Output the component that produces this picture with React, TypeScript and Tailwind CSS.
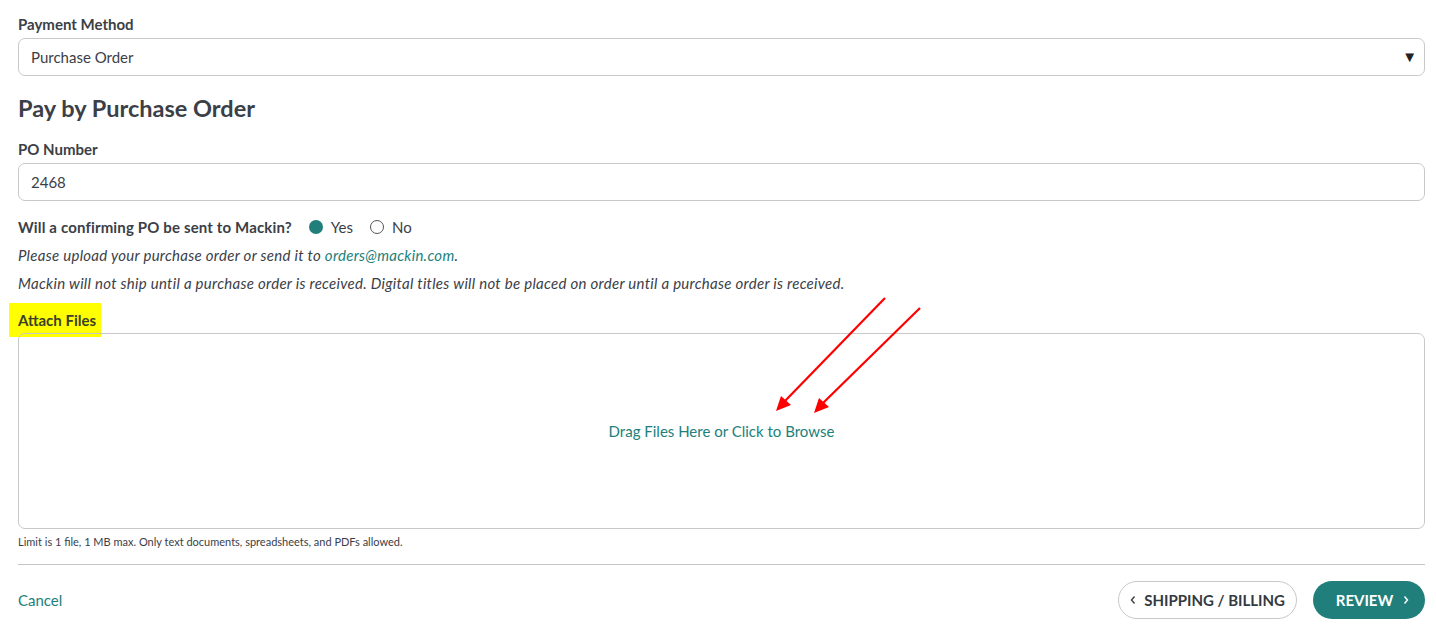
import React, { useState } from "react";

export default function App() {
  const [confirm, setConfirm] = useState("yes");

  return (
    <div
      className="relative w-[1436px] h-[635px] bg-white pl-[18px] pr-[11px] pt-[14px] text-[#3b4047] overflow-hidden"
      style={{ fontFamily: "Lato, 'Liberation Sans', sans-serif" }}
    >
      {/* Payment method */}
      <label className="block text-[15px] font-bold leading-[20px]">Payment Method</label>
      <div className="mt-[4px] relative h-[38px] border border-[#c9c9c9] rounded-[7px] flex items-center pl-[12px] text-[15px]">
        Purchase Order
        <span className="absolute right-[7px] top-[10px] text-[15px] text-[#222] leading-none">▼</span>
      </div>

      <h2 className="mt-[18px] text-[23.5px] font-bold leading-[28px]">Pay by Purchase Order</h2>

      {/* PO number */}
      <label className="block mt-[17px] text-[15px] font-bold leading-[20px]">PO Number</label>
      <div className="mt-[4px] h-[38px] border border-[#c9c9c9] rounded-[7px] flex items-center pl-[12px] text-[15px]">
        2468
      </div>

      {/* confirming PO */}
      <div className="mt-[16px] flex items-center text-[15px] leading-[20px]">
        <span className="font-bold tracking-[0.15px]">Will a confirming PO be sent to Mackin?</span>
        <button onClick={() => setConfirm("yes")} className="ml-[17px] flex items-center gap-[8px]">
          <span
            className={`w-[14px] h-[14px] rounded-full ${
              confirm === "yes" ? "bg-[#217f7b]" : "border border-[#555]"
            }`}
          />
          Yes
        </button>
        <button onClick={() => setConfirm("no")} className="ml-[17px] flex items-center gap-[8px]">
          <span
            className={`w-[14px] h-[14px] rounded-full ${
              confirm === "no" ? "bg-[#217f7b]" : "border border-[#555]"
            }`}
          />
          No
        </button>
      </div>
      <p className="mt-[8px] italic text-[15px] leading-[20px] tracking-[0.28px]">
        Please upload your purchase order or send it to{" "}
        <a className="text-[#217f7b]">orders@mackin.com</a>.
      </p>
      <p className="mt-[8px] italic text-[15px] leading-[20px] tracking-[0.28px]">
        Mackin will not ship until a purchase order is received. Digital titles will not be placed on
        order until a purchase order is received.
      </p>

      {/* attach files */}
      <div className="mt-[10px] -ml-[9px] w-[92px] h-[34px] bg-[#ffff00] pl-[9px] pt-[7px] text-[15px] font-bold leading-[20px] text-[#3b3f2a]">
        Attach Files
      </div>
      <div className="-mt-[4px] h-[196px] border border-[#c9c9c9] rounded-[7px] flex items-center justify-center text-[15px] text-[#217f7b] pt-[1px]">
        Drag Files Here or Click to Browse
      </div>
      <p className="mt-[6px] text-[11px] leading-[14px]">
        Limit is 1 file, 1 MB max. Only text documents, spreadsheets, and PDFs allowed.
      </p>

      <div className="mt-[15px] border-t border-[#c4c4c4]" />

      {/* footer */}
      <div className="mt-[16px] flex items-center justify-between">
        <a className="text-[15px] text-[#217f7b]">Cancel</a>
        <div className="flex items-center gap-[16px]">
          <button className="h-[38px] pl-[10px] pr-[11px] rounded-full border border-[#c9c9c9] flex items-center gap-[7px] text-[15px] font-bold text-[#343a40]">
            <svg width="8" height="10" viewBox="0 0 8 10">
              <path d="M5.5 1.5 L2.5 5 L5.5 8.5" fill="none" stroke="#3b4047" strokeWidth="1.4" />
            </svg>
            SHIPPING / BILLING
          </button>
          <button className="h-[38px] w-[112px] pl-[8px] rounded-full bg-[#217f7b] flex items-center justify-center gap-[9px] text-[15px] font-bold text-white">
            REVIEW
            <svg width="8" height="10" viewBox="0 0 8 10">
              <path d="M2.5 1.5 L5.5 5 L2.5 8.5" fill="none" stroke="#fff" strokeWidth="1.4" />
            </svg>
          </button>
        </div>
      </div>

      {/* red annotation arrows */}
      <svg className="absolute left-0 top-0 pointer-events-none" width="1436" height="635">
        <line x1="885" y1="298" x2="784" y2="402" stroke="#ff0000" strokeWidth="2.2" />
        <polygon points="776,411 781,396 791,405" fill="#ff0000" />
        <line x1="920" y1="308" x2="822" y2="404" stroke="#ff0000" strokeWidth="2.2" />
        <polygon points="814,413 819,398 829,407" fill="#ff0000" />
      </svg>
    </div>
  );
}
